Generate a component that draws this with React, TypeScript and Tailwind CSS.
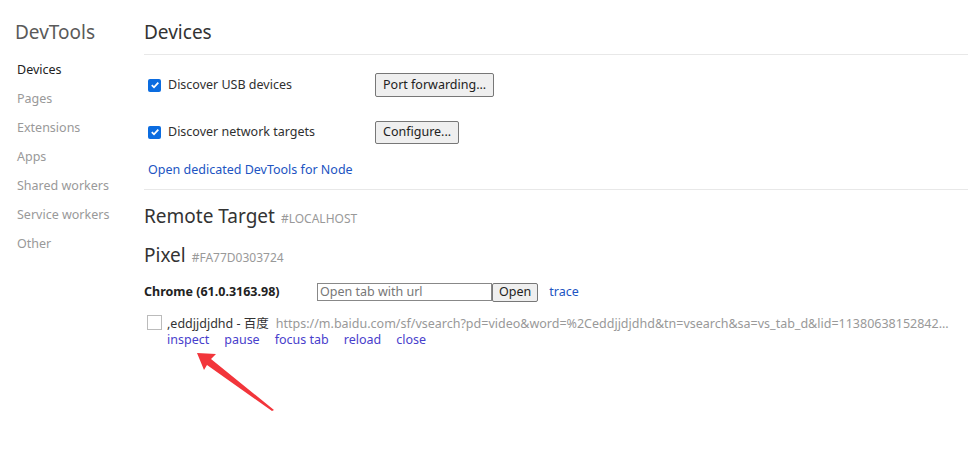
const font = { fontFamily: '"Noto Sans", "Noto Sans CJK SC", sans-serif' };

const navItems = ["Devices", "Pages", "Extensions", "Apps", "Shared workers", "Service workers", "Other"];

function Check() {
  return (
    <span className="w-[13px] h-[13px] rounded-[2px] bg-[#0b6ce0] grid place-items-center shrink-0">
      <svg width="10" height="10" viewBox="0 0 10 10">
        <path d="M1.8 5.2 L4 7.3 L8.3 2.6" stroke="white" strokeWidth="1.8" fill="none" />
      </svg>
    </span>
  );
}

export default function App() {
  return (
    <div className="relative w-[968px] h-[472px] overflow-hidden bg-white flex text-[12.5px] text-[#303030]" style={font}>
      <aside className="w-[144px] shrink-0 pl-[15px] pt-[19px]">
        <h1 className="text-[19px] leading-[26px] text-[#5a5a5a]">DevTools</h1>
        <nav className="mt-[10px] pl-[2px] flex flex-col">
          {navItems.map((n, i) => (
            <div key={n} className={`h-[29px] leading-[29px] ${i === 0 ? "text-[#222]" : "text-[#999]"}`}>
              {n}
            </div>
          ))}
        </nav>
      </aside>

      <main className="flex-1 min-w-0 pt-[19px]">
        <h2 className="text-[19px] leading-[26px] text-[#333]">Devices</h2>
        <div className="mt-[9px] border-t border-[#e8e8e8]" />

        <div className="pl-[4px]">
          <div className="h-[28px] mt-[16px] flex items-center">
            <label className="flex items-center gap-[7px] w-[227px]">
              <Check />
              <span>Discover USB devices</span>
            </label>
            <button className="h-[24px] px-[7px] border border-[#777] rounded-[2px] bg-[#efefef] text-[#222]">
              Port forwarding...
            </button>
          </div>
          <div className="h-[28px] mt-[19px] flex items-center">
            <label className="flex items-center gap-[7px] w-[227px]">
              <Check />
              <span>Discover network targets</span>
            </label>
            <button className="h-[23px] px-[7px] border border-[#777] rounded-[2px] bg-[#efefef] text-[#222]">
              Configure...
            </button>
          </div>
          <a className="block mt-[15px] leading-[18px] text-[#2154c2]">Open dedicated DevTools for Node</a>
        </div>
        <div className="mt-[10px] border-t border-[#e8e8e8]" />

        <div className="mt-[13px] flex items-baseline gap-[6px]">
          <span className="text-[19px] leading-[26px] text-[#333]">Remote Target</span>
          <span className="text-[12px] text-[#999]">#LOCALHOST</span>
        </div>
        <div className="mt-[13px] flex items-baseline gap-[6px]">
          <span className="text-[19px] leading-[26px] text-[#333]">Pixel</span>
          <span className="text-[12px] text-[#999]">#FA77D0303724</span>
        </div>

        <div className="mt-[14px] h-[20px] flex items-center">
          <span className="font-bold w-[173px] text-[#222]">Chrome (61.0.3163.98)</span>
          <input
            className="w-[175px] h-[18px] border border-[#888] px-[2px] text-[12.5px] placeholder-[#777] outline-none"
            placeholder="Open tab with url"
            style={font}
          />
          <button className="h-[19px] px-[6px] border border-[#777] rounded-[2px] bg-[#efefef] text-[#222] leading-none">
            Open
          </button>
          <a className="ml-[11px] text-[#2154c2]">trace</a>
        </div>

        <div className="mt-[13px] flex">
          <span className="w-[15px] h-[15px] border border-[#bbb] ml-[3px] mr-[5px] shrink-0" />
          <div className="min-w-0 flex-1">
            <div className="flex leading-[18px] whitespace-nowrap">
              <span className="shrink-0 text-[#333]">,eddjjdjdhd - 百度</span>
              <span className="ml-[7px] text-[#999]">
                https://m.baidu.com/sf/vsearch?pd=video&amp;word=%2Ceddjjdjdhd&amp;tn=vsearch&amp;sa=vs_tab_d&amp;lid=11380638152842...
              </span>
            </div>
            <div className="flex gap-[15px] leading-[14px] text-[#4840cc]">
              <a>inspect</a>
              <a>pause</a>
              <a>focus tab</a>
              <a>reload</a>
              <a>close</a>
            </div>
          </div>
        </div>
      </main>

      <svg className="absolute left-[190px] top-[345px]" width="90" height="72" viewBox="0 0 90 72">
        <path d="M7 8 L26 9 L21 14 L84 65 L82 66 L17 20 L14 25 Z" fill="#f2353b" />
      </svg>
    </div>
  );
}
